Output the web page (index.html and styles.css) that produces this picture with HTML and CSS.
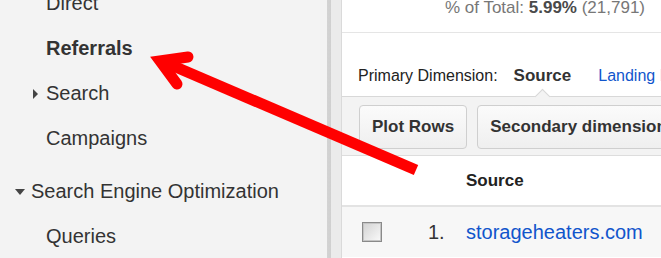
FILE: index.html
```html
<!DOCTYPE html>
<html lang="en">
<head>
    <meta charset="UTF-8">
    <title>Traffic Sources - Referrals</title>
    <link rel="stylesheet" href="styles.css">
</head>
<body>
    <div class="sidebar">
        <ul class="nav">
            <li class="nav-item">Direct</li>
            <li class="nav-item active">Referrals</li>
            <li class="nav-item"><span class="caret-right"></span>Search</li>
            <li class="nav-item">Campaigns</li>
            <li class="nav-group"><span class="caret-down"></span>Search Engine Optimization</li>
            <li class="nav-item">Queries</li>
        </ul>
    </div>
    <div class="divider"></div>

    <div class="content">
        <div class="summary">
            % of Total: <b>5.99%</b> (21,791)
        </div>

        <div class="dimension">
            <span class="dimension-label">Primary Dimension:</span>
            <span class="current">Source</span>
            <a class="dimension-link" href="#">Landing Page</a>
        </div>

        <div class="toolbar">
            <button class="btn">Plot Rows</button>
            <button class="btn">Secondary dimension</button>
        </div>

        <div class="table-head">
            <span></span>
            <span></span>
            <span class="col-title">Source</span>
        </div>

        <div class="table-row">
            <span class="checkbox"></span>
            <span class="row-num">1.</span>
            <a class="row-link" href="#">storageheaters.com</a>
        </div>
    </div>

    <svg class="arrow" width="661" height="258" viewBox="0 0 661 258">
        <line x1="164" y1="62" x2="416" y2="170" stroke="#ff0000" stroke-width="11"/>
        <polyline points="188,57 160,61 177,84" fill="none" stroke="#ff0000" stroke-width="11"
                  stroke-linejoin="miter" stroke-miterlimit="10" stroke-linecap="round"/>
    </svg>
</body>
</html>
```

FILE: styles.css
```css
* {
    box-sizing: border-box;
    margin: 0;
    padding: 0;
}

body {
    position: relative;
    display: flex;
    height: 258px;
    overflow: hidden;
    font-family: "Liberation Sans", Arial, sans-serif;
    color: #333;
    background: #fff;
}

/* left navigation */
.sidebar {
    width: 327px;
    flex-shrink: 0;
    background: #f3f3f3;
}

.nav {
    list-style: none;
    margin-top: -19px;
}

.nav-item,
.nav-group {
    display: flex;
    align-items: center;
    height: 45px;
    line-height: 45px;
    font-size: 20px;
    color: #333;
    white-space: nowrap;
}

.nav-item {
    padding-left: 46px;
}

.nav-item.active {
    font-weight: bold;
}

.nav-group {
    padding-left: 15px;
    margin-top: 8px;
}

.caret-right {
    width: 0;
    height: 0;
    margin-left: -13px;
    margin-right: 8px;
    border-top: 5px solid transparent;
    border-bottom: 5px solid transparent;
    border-left: 5px solid #444;
}

.caret-down {
    width: 0;
    height: 0;
    margin-right: 6px;
    border-left: 5px solid transparent;
    border-right: 5px solid transparent;
    border-top: 6px solid #444;
}

.divider {
    width: 15px;
    flex-shrink: 0;
    background: linear-gradient(to right, #d3d3d3 0, #d0d0d0 4px, #ebebeb 4px);
    border-right: 1px solid #dadada;
}

/* report panel */
.content {
    flex: 1;
    min-width: 0;
    overflow: hidden;
    white-space: nowrap;
}

.summary {
    height: 33px;
    padding: 0 16px;
    border-bottom: 1px solid #e5e5e5;
    text-align: right;
    font-size: 17px;
    line-height: 16px;
    color: #777;
}

.summary b {
    color: #4a4a4a;
}

.dimension {
    display: flex;
    align-items: flex-end;
    height: 63px;
    padding: 0 16px 10px;
    font-size: 16px;
    line-height: 20px;
}

.dimension-label {
    color: #222;
}

.current {
    position: relative;
    margin-left: 16px;
    font-size: 17px;
    font-weight: bold;
    color: #333;
}

.current::after {
    content: '';
    position: absolute;
    left: 50%;
    bottom: -16px;
    width: 10px;
    height: 10px;
    margin-left: -5px;
    transform: rotate(45deg);
    background: #f3f3f3;
    border-top: 1px solid #d8d8d8;
    border-left: 1px solid #d8d8d8;
}

.dimension-link {
    margin-left: 27px;
    color: #15c;
    text-decoration: none;
}

.toolbar {
    display: flex;
    gap: 10px;
    height: 60px;
    padding: 8px 17px 0;
    background: #f3f3f3;
    border-top: 1px solid #d8d8d8;
    border-bottom: 1px solid #dddddd;
}

.btn {
    flex-shrink: 0;
    height: 44px;
    padding: 0 12px;
    font-family: inherit;
    font-size: 17px;
    font-weight: bold;
    color: #333;
    background: linear-gradient(#fbfbfb, #efefef);
    border: 1px solid #cfcfcf;
    border-radius: 4px;
}

.table-head,
.table-row {
    display: grid;
    grid-template-columns: 66px 38px 1fr;
    align-items: center;
    padding-left: 20px;
}

.table-head {
    height: 51px;
    border-bottom: 2px solid #e3e3e3;
}

.col-title {
    font-size: 17px;
    font-weight: bold;
    line-height: 20px;
    color: #222;
}

.table-row {
    height: 50px;
    background: #f7f7f7;
    font-size: 20px;
    line-height: 24px;
}

.checkbox {
    width: 20px;
    height: 20px;
    border: 1px solid #8a8a8a;
    box-shadow: inset 0 0 0 1px #c4c4c4;
    background: linear-gradient(135deg, #d2d2d2, #fafafa);
}

.row-num {
    color: #333;
}

.row-link {
    color: #15c;
    text-decoration: none;
}

.arrow {
    position: absolute;
    top: 0;
    left: 0;
    pointer-events: none;
}
```
